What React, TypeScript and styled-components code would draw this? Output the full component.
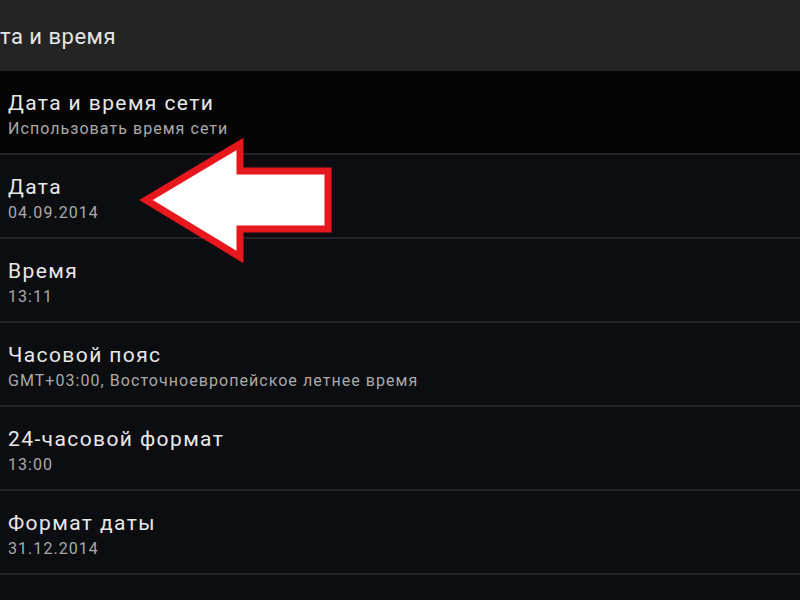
import React from "react";
import styled, { createGlobalStyle } from "styled-components";

const Global = createGlobalStyle`
  html, body { margin: 0; padding: 0; background: #0c0d10; }
  body { font-family: Roboto, "Noto Sans", "DejaVu Sans", sans-serif; }
  #root { width: 800px; height: 600px; overflow: hidden; }
`;

const Screen = styled.div`
  position: relative;
  width: 800px;
  height: 600px;
  overflow: hidden;
  background: #0c0d10;
  display: flex;
  flex-direction: column;
`;

const Header = styled.div`
  height: 71px;
  flex: none;
  background: #242424;
  display: flex;
  align-items: center;
  box-sizing: border-box;
`;

const HeaderTitle = styled.div`
  color: #e6e6e6;
  font-size: 22px;
  letter-spacing: 0.5px;
  margin-top: 2px;
`;

const List = styled.div`
  display: flex;
  flex-direction: column;
`;

const Row = styled.div<{ $dark?: boolean }>`
  height: 84px;
  flex: none;
  box-sizing: border-box;
  background: ${(p) => (p.$dark ? "#050505" : "#0c0d10")};
  border-bottom: 2px solid #25262a;
  padding: 19px 0 0 8px;
  display: flex;
  flex-direction: column;
`;

const Title = styled.div`
  color: #e8e8e8;
  font-size: 21px;
  line-height: 26px;
  letter-spacing: 1.4px;
`;

const Subtitle = styled.div`
  color: #a9a9a9;
  font-size: 16px;
  line-height: 22px;
  letter-spacing: 1.05px;
  margin-top: 2px;
`;

const Arrow = styled.svg`
  position: absolute;
  left: 0;
  top: 0;
  pointer-events: none;
`;

const items = [
  { t: "Дата и время сети", s: "Использовать время сети" },
  { t: "Дата", s: "04.09.2014" },
  { t: "Время", s: "13:11" },
  { t: "Часовой пояс", s: "GMT+03:00, Восточноевропейское летнее время" },
  { t: "24-часовой формат", s: "13:00" },
  { t: "Формат даты", s: "31.12.2014" },
];

export default function App() {
  return (
    <>
      <Global />
      <Screen>
        <Header>
          <HeaderTitle>та и время</HeaderTitle>
        </Header>
        <List>
          {items.map((it, i) => (
            <Row key={i} $dark={i === 0}>
              <Title>{it.t}</Title>
              <Subtitle>{it.s}</Subtitle>
            </Row>
          ))}
          <Row />
        </List>
        <Arrow width="800" height="600" viewBox="0 0 800 600">
          <polygon
            points="146,200 240,144 240,171 328,171 328,229 240,229 240,257"
            fill="#ffffff"
            stroke="#e8161d"
            strokeWidth="7"
            strokeLinejoin="miter"
          />
        </Arrow>
      </Screen>
    </>
  );
}
